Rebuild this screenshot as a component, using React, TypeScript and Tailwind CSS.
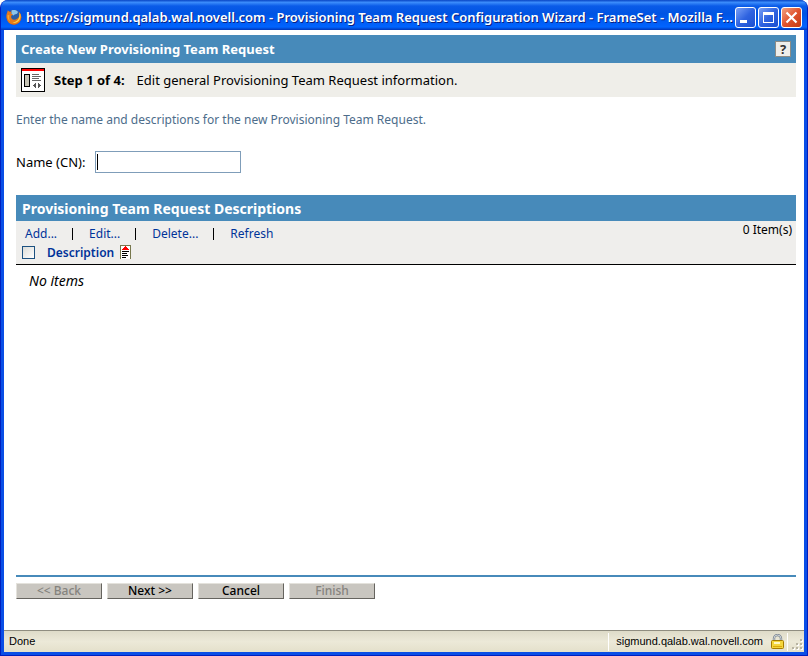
import React, { useState } from 'react';

const FirefoxIcon: React.FC = () => (
  <svg width="16" height="16" viewBox="0 0 16 16" aria-hidden="true">
    <circle cx="8" cy="8.3" r="7.4" fill="#c8500f" />
    <circle cx="8.400" cy="6.600" r="5.800" fill="#2a5fa8" />
    <path d="M5.500 1.600c2.400-1 5-.4 6.500 1.400l-1 1.800-2.400.6-1.200 1.200-2-1z" fill="#8cc6ec" />
    <path d="M1.200 3.600l.6-2.400 1.600 1.600 2.200.2-.8 1.600 2.200.8-1.800 1.400c-.6 2.200.8 4 3 4 2.200 0 4-1.200 4.800-3.200.6-1.600.4-3.200-.2-4.800 2.200 2 3 5 2 7.800A7.400 7.400 0 0 1 8 15.400 7.400 7.400 0 0 1 .7 9.500C.2 7 .4 5.200 1.200 3.600z" fill="#e77a1a" />
    <path d="M13.600 3.600c1.400 2.600 1.200 5.800-.6 8-1.600 2-4.200 2.800-6.600 2 3.800-.2 6.400-2.800 6.900-6z" fill="#fbd54a" />
    <path d="M1.600 6c-.4 2.600.6 5.200 2.600 6.600-1-2-1.400-4.400-.8-6.400z" fill="#f6a92e" />
  </svg>
);

const PropertyIcon: React.FC = () => (
  <svg width="24" height="24" viewBox="0 0 24 24" shapeRendering="crispEdges" aria-hidden="true">
    <rect width="24" height="24" fill="#000" />
    <rect x="1" y="1" width="22" height="22" fill="#fff" />
    <rect x="1" y="1" width="22" height="2" fill="#f00" />
    <rect x="3" y="6" width="6" height="13" fill="#000" />
    <rect x="4" y="7" width="4" height="11" fill="#c6c3b4" />
    <path d="M11 6h7v1h-7zM11 8h9v1h-9zM11 10h7v1h-7zM11 12h9v1h-9z" fill="#666" />
    <path d="M14 15h1v5h-1zM13 16h1v3h-1zM12 17h1v1h-1zM17 15h1v5h-1zM18 16h1v3h-1zM19 17h1v1h-1z" fill="#555" />
  </svg>
);

const SortIcon: React.FC = () => (
  <svg width="11" height="14" viewBox="0 0 11 14" shapeRendering="crispEdges" aria-hidden="true">
    <rect width="11" height="14" fill="#fff" />
    <path d="M0 0h11v14h-1V1H1v13H0z" fill="#77774d" />
    <path d="M5 1h1v1h1v1h1v1h1v1H2V4h1V3h1V2h1z" fill="#f00" />
    <path d="M2 6h7v1H2zM2 8h5v1H2zM2 10h6v1H2zM2 12h4v1H2z" fill="#000" />
  </svg>
);

const LockIcon: React.FC = () => (
  <svg width="13" height="15" viewBox="0 0 13 15" aria-hidden="true">
    <path d="M3 7V4.500a3.500 3.500 0 0 1 7 0V7" fill="none" stroke="#7d8790" strokeWidth="2.400" />
    <path d="M3 7V4.500a3.500 3.500 0 0 1 7 0V7" fill="none" stroke="#cfd6dc" strokeWidth="1" />
    <rect x=".5" y="6.500" width="12" height="8" rx="1" fill="#f5d63c" stroke="#a67c00" />
    <rect x="3" y="8" width="6" height="2" fill="#fff8c4" />
    <path d="M2 12.500h9" stroke="#dca90e" />
  </svg>
);

const Grip: React.FC = () => (
  <svg width="12" height="12" viewBox="0 0 12 12" shapeRendering="crispEdges" aria-hidden="true">
    <path d="M9 1h2v2H9zM9 5h2v2H9zM5 5h2v2H5zM9 9h2v2H9zM5 9h2v2H5zM1 9h2v2H1z" fill="#fff" />
    <path d="M8 0h2v2H8zM8 4h2v2H8zM4 4h2v2H4zM8 8h2v2H8zM4 8h2v2H4zM0 8h2v2H0z" fill="#b8b4a2" />
  </svg>
);

const windowButton = 'flex h-[21px] w-[21px] items-center justify-center rounded-[3px] border border-white';
const blueButton = 'bg-linear-to-br from-[#7a9ff5] via-[#2f63e0] to-[#1a4fd0]';

const TitleBar: React.FC = () => (
  <header className="flex h-[30px] shrink-0 items-center bg-[linear-gradient(to_bottom,#0845c4_0%,#3b8cfb_8%,#0a5be8_20%,#0054e3_45%,#0060fa_80%,#0064ff_90%,#0036b8_100%)] pt-1 pr-[5px] pl-[5px]">
    <FirefoxIcon />
    <h1 className="ml-1 min-w-0 flex-1 overflow-hidden text-[13px] leading-5 font-semibold whitespace-nowrap text-white [text-shadow:1px_1px_0_#0a1f80]">
      https://sigmund.qalab.wal.novell.com - Provisioning Team Request Configuration Wizard - FrameSet - Mozilla F...
    </h1>
    <div className="flex gap-0.5">
      <button type="button" aria-label="Minimize" className={`${windowButton} ${blueButton}`}>
        <svg width="15" height="15" viewBox="0 0 15 15" shapeRendering="crispEdges">
          <rect x="2" y="10" width="7" height="3" fill="#fff" />
        </svg>
      </button>
      <button type="button" aria-label="Maximize" className={`${windowButton} ${blueButton}`}>
        <svg width="15" height="15" viewBox="0 0 15 15" shapeRendering="crispEdges">
          <path d="M2 2h11v11H2zM3 5v7h9V5z" fill="#fff" fillRule="evenodd" />
        </svg>
      </button>
      <button type="button" aria-label="Close" className={`${windowButton} bg-linear-to-br from-[#f0a080] via-[#e0532d] to-[#c43a12]`}>
        <svg width="15" height="15" viewBox="0 0 15 15">
          <path d="M2.500 2.500l10 10M12.500 2.500l-10 10" stroke="#fff" strokeWidth="2.200" />
        </svg>
      </button>
    </div>
  </header>
);

const actions = ['Add...', 'Edit...', 'Delete...', 'Refresh'];

const wizardButtons = [
  { label: '<< Back', disabled: true },
  { label: 'Next >>', disabled: false },
  { label: 'Cancel', disabled: false },
  { label: 'Finish', disabled: true },
];

const Descriptions: React.FC = () => (
  <section>
    <h2 className="bg-[#478aba] px-1.5 pt-px text-[14px] leading-[25px] font-bold text-white">
      Provisioning Team Request Descriptions
    </h2>
    <div className="flex items-start justify-between bg-[#efeeec] pr-1 pl-[9px]">
      <ul className="flex h-[22px] items-center pt-1 text-[12px] leading-4">
        {actions.map((action, index) => (
          <li key={action} className="flex items-center">
            {index > 0 && <span className="mr-4 ml-[15px] h-3 w-px bg-black" />}
            <a href="#" className="text-[#003399]">{action}</a>
          </li>
        ))}
      </ul>
      <span className="text-[12px] leading-[18px]">0 Item(s)</span>
    </div>
    <table className="w-full border-collapse text-left">
      <thead>
        <tr className="h-[21px] border-b border-black bg-[#efeeec]">
          <th className="w-[31px] p-0 pb-0.5 pl-1.5 align-middle">
            <input
              type="checkbox"
              aria-label="Select all"
              className="block h-[13px] w-[13px] appearance-none border border-[#1c5180] bg-linear-to-br from-[#dcdcd7] to-white"
            />
          </th>
          <th className="p-0 pb-0.5 align-middle">
            <button type="button" className="flex items-center gap-1.5 text-[12px] leading-[17px] font-semibold text-[#003399]">
              Description
              <SortIcon />
            </button>
          </th>
        </tr>
      </thead>
      <tbody>
        <tr>
          <td colSpan={2} className="pt-1.5 pl-[13px] text-[14px] leading-5 italic">No items</td>
        </tr>
      </tbody>
    </table>
  </section>
);

const App: React.FC = () => {
  const [name, setName] = useState('');

  return (
    <div className="min-h-screen bg-white">
      <div className="flex min-h-screen flex-col overflow-hidden rounded-t-lg border-x border-b border-[#001fc0] bg-[#0a50e0] font-['Noto_Sans','Open_Sans',sans-serif] text-black">
        <TitleBar />
        <div className="flex flex-1 flex-col border-x-3 border-b-3 border-[#0a4ee6]">
          <main className="flex flex-1 flex-col bg-white px-3 pt-[5px] pr-2">
            <div className="flex h-7 items-center justify-between bg-[#478aba] px-[5px]">
              <h2 className="text-[13px] leading-5 font-bold text-white">Create New Provisioning Team Request</h2>
              <button
                type="button"
                aria-label="Help"
                className="flex h-4 w-4 items-center justify-center border border-[#8c8c86] bg-[#efeeea] text-[13px] leading-none font-bold text-[#333]"
              >
                ?
              </button>
            </div>
            <div className="flex h-[34px] items-center gap-[9px] bg-[#efeee9] pl-[5px] text-[13px]">
              <PropertyIcon />
              <p className="flex items-baseline gap-3 pt-px">
                <strong>Step 1 of 4:</strong>
                <span>Edit general Provisioning Team Request information.</span>
              </p>
            </div>

            <p className="mt-3.5 text-[12px] leading-[18px] text-[#4d6d8b]">
              Enter the name and descriptions for the new Provisioning Team Request.
            </p>

            <div className="mt-[22px] mb-[22px] flex items-center gap-2.5 text-[13px]">
              <label htmlFor="cn" className="pt-px">Name (CN):</label>
              <div className="relative">
                <input
                  id="cn"
                  type="text"
                  autoFocus
                  value={name}
                  onChange={(e) => setName(e.target.value)}
                  className="block h-[22px] w-[146px] border border-[#7f9db9] bg-white px-px outline-none"
                />
                {name === '' && <span className="pointer-events-none absolute top-[3px] left-0.5 h-4 w-px bg-black" />}
              </div>
            </div>

            <Descriptions />

            <footer className="mt-auto mb-[31px] flex gap-[5px] border-t-2 border-[#478aba] pt-1.5">
              {wizardButtons.map(({ label, disabled }) => (
                <button
                  key={label}
                  type="button"
                  disabled={disabled}
                  className="flex h-4 w-[86px] items-center justify-center border border-t-[#e4e2dc] border-r-[#66645f] border-b-[#66645f] border-l-[#e4e2dc] bg-[#c9c6c0] text-[12px] leading-none font-medium text-black disabled:text-[#85837e]"
                >
                  {label}
                </button>
              ))}
            </footer>
          </main>

          <div className="flex h-[22px] shrink-0 items-center border-t border-[#8f8d80] bg-linear-to-b from-[#dedbc8] via-[#ece9d8] to-[#e4e0cb] pl-[5px] font-['Liberation_Sans',sans-serif] text-[11px]">
            <span className="flex-1">Done</span>
            <div className="flex h-[18px] items-center gap-2 border-l border-white pr-[3px] pl-[7px]">
              sigmund.qalab.wal.novell.com
              <LockIcon />
            </div>
            <div className="flex h-[18px] items-end border-l border-white pl-1">
              <Grip />
            </div>
          </div>
        </div>
      </div>
    </div>
  );
};

export default App;
